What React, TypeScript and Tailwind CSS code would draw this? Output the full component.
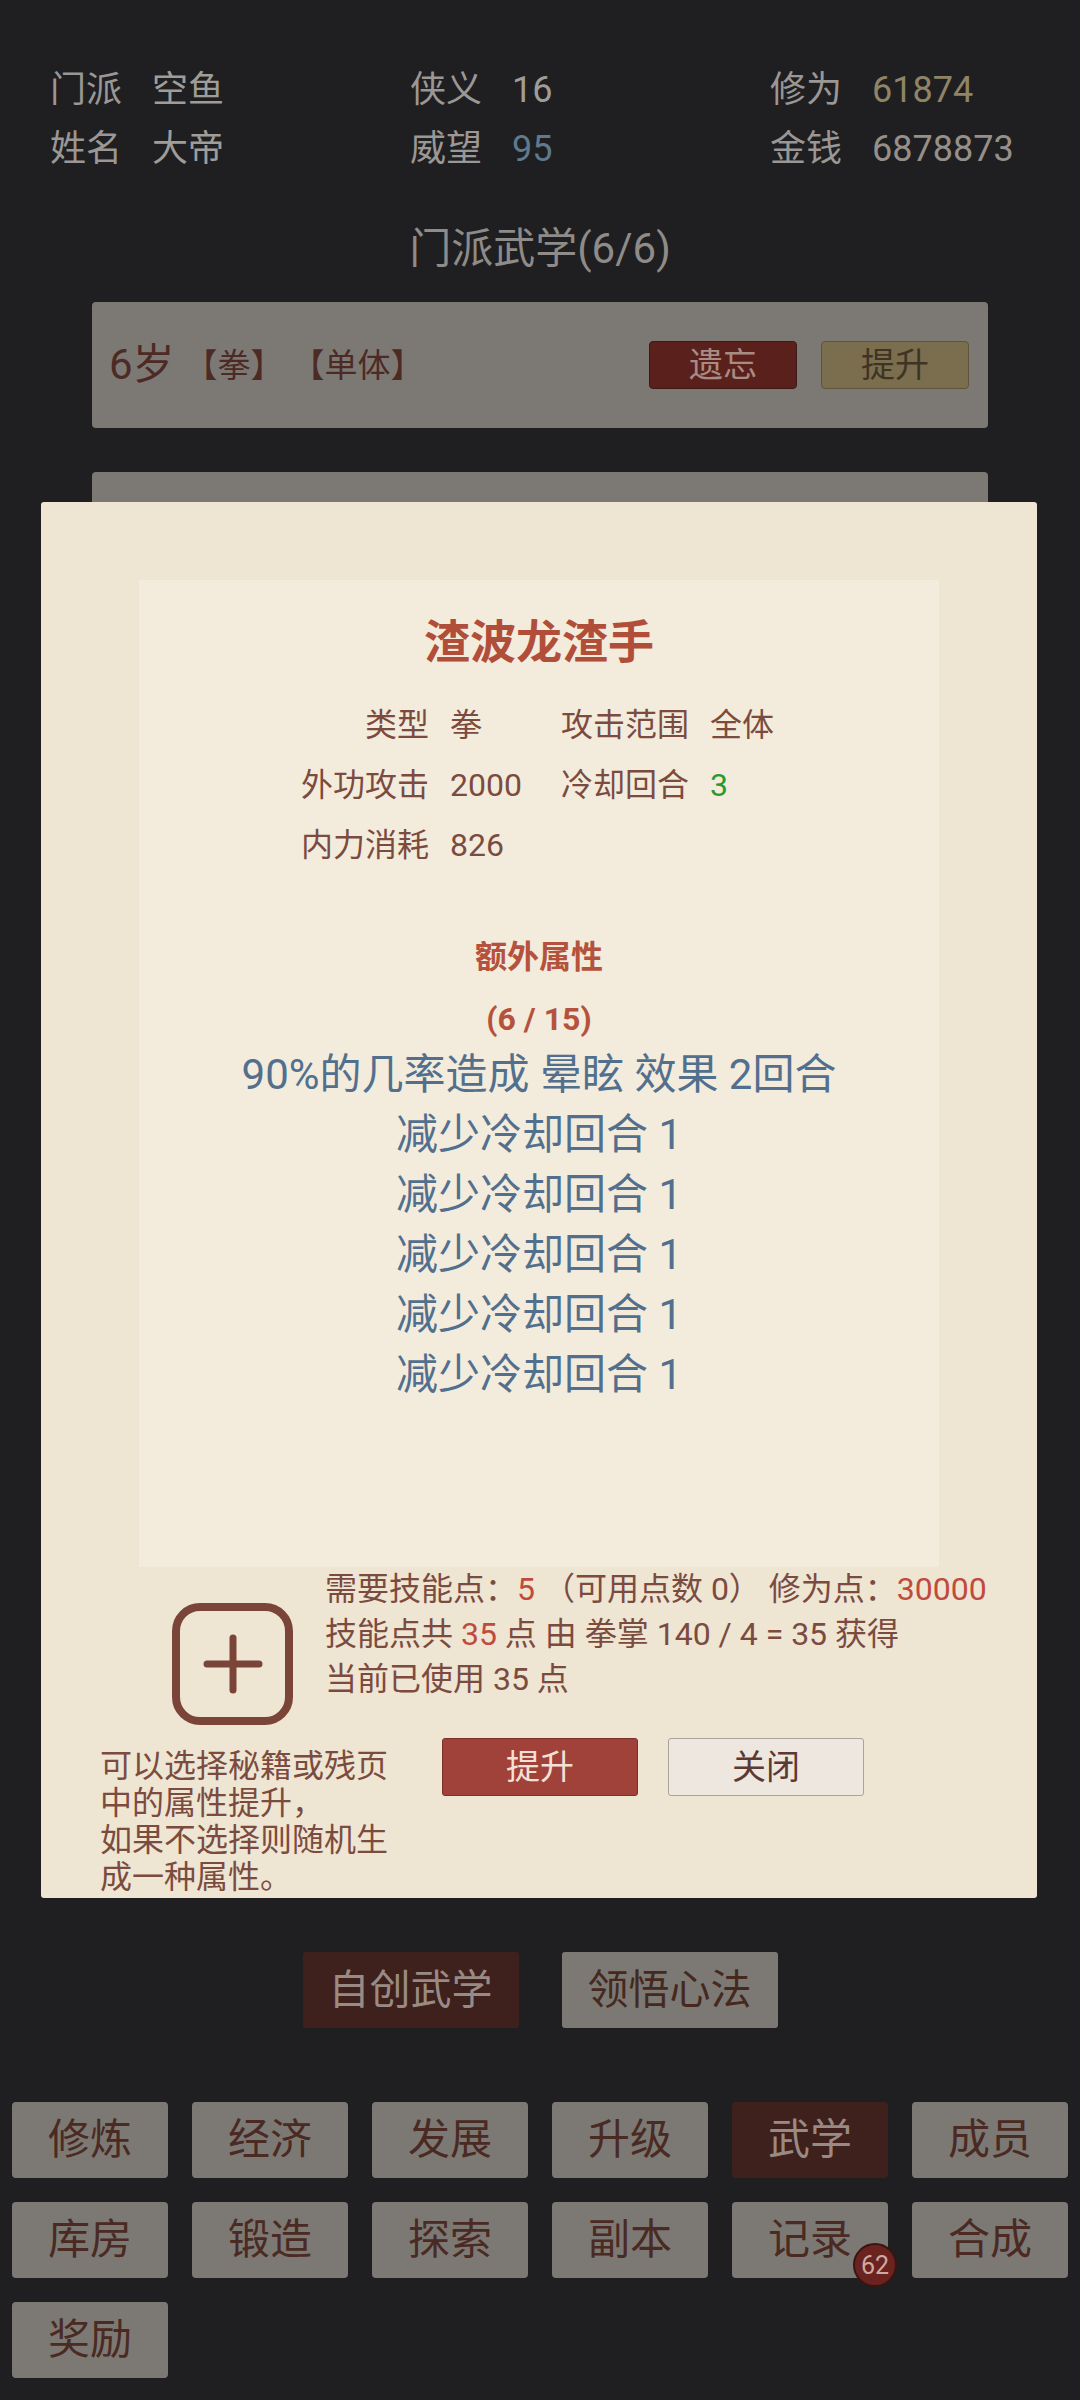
import React from "react";

const navItems = ["修炼", "经济", "发展", "升级", "武学", "成员", "库房", "锻造", "探索", "副本", "记录", "合成", "奖励"];

function StatCol({ rows }: { rows: { label: string; value: string; color: string }[] }) {
  return (
    <div className="w-[360px] pl-[50px]">
      {rows.map((r) => (
        <div key={r.label} className="h-[59px] flex items-center text-[36px]">
          <span className="w-[72px] text-[#9a9794]">{r.label}</span>
          <span className={"ml-[30px] " + r.color}>{r.value}</span>
        </div>
      ))}
    </div>
  );
}

export default function App() {
  return (
    <div className="relative w-[1080px] h-[2400px] overflow-hidden bg-[#1f1f21] font-['Roboto','Noto_Sans_CJK_SC',sans-serif]">
      {/* top stats */}
      <div className="flex pt-[60px]">
        <StatCol
          rows={[
            { label: "门派", value: "空鱼", color: "text-[#a09d98]" },
            { label: "姓名", value: "大帝", color: "text-[#a09d98]" },
          ]}
        />
        <StatCol
          rows={[
            { label: "侠义", value: "16", color: "text-[#a09d98]" },
            { label: "威望", value: "95", color: "text-[#5e7a8c]" },
          ]}
        />
        <StatCol
          rows={[
            { label: "修为", value: "61874", color: "text-[#8f8566]" },
            { label: "金钱", value: "6878873", color: "text-[#978f89]" },
          ]}
        />
      </div>

      <div className="mt-[41px] h-[60px] leading-[60px] text-center text-[42px] text-[#8e8b88]">门派武学(6/6)</div>

      {/* cards */}
      <div className="mt-[23px] h-[1650px] overflow-hidden">
        <div className="mx-[92px] flex flex-col gap-[44px]">
          <div className="h-[126px] rounded-[4px] bg-[#7c7975] flex items-center pl-[17px] pr-[19px]">
            <span className="text-[42px] text-[#4d2a24] leading-none">6岁</span>
            <span className="ml-[10px] text-[33px] text-[#4d2a24] leading-none">【拳】</span>
            <span className="ml-[8px] text-[33px] text-[#4d2a24] leading-none">【单体】</span>
            <div className="flex-1" />
            <div className="w-[148px] h-[48px] rounded-[4px] border border-[#3d1a17] bg-[#5a211c] flex items-center justify-center text-[34px] leading-none text-[#a88c84]">
              遗忘
            </div>
            <div className="ml-[24px] w-[148px] h-[48px] rounded-[4px] border border-[#5f553d] bg-[#7a6e4f] flex items-center justify-center text-[34px] leading-none text-[#3f3424]">
              提升
            </div>
          </div>
          <div className="h-[126px] rounded-[4px] bg-[#7c7975]" />
          <div className="h-[126px] rounded-[4px] bg-[#7c7975]" />
          <div className="h-[126px] rounded-[4px] bg-[#7c7975]" />
          <div className="h-[126px] rounded-[4px] bg-[#7c7975]" />
          <div className="h-[126px] rounded-[4px] bg-[#7c7975]" />
        </div>
      </div>

      {/* create / comprehend */}
      <div className="flex justify-center gap-[43px]">
        <div className="w-[216px] h-[76px] rounded-[3px] bg-[#3e201c] flex items-center justify-center text-[41px] leading-none text-[#9a8a84]">
          自创武学
        </div>
        <div className="w-[216px] h-[76px] rounded-[3px] bg-[#7c7975] flex items-center justify-center text-[41px] leading-none text-[#45291f]">
          领悟心法
        </div>
      </div>

      {/* nav grid */}
      <div className="mt-[74px] px-[12px] grid grid-cols-6 gap-[24px]">
        {navItems.map((n) => {
          const active = n === "武学";
          return (
            <div
              key={n}
              className={
                "relative h-[76px] rounded-[4px] flex items-center justify-center text-[42px] leading-none " +
                (active ? "bg-[#3e201c] text-[#9a8a84]" : "bg-[#7c7975] text-[#4a2a22]")
              }
            >
              {n}
              {n === "记录" && (
                <div className="absolute -right-[9px] -bottom-[9px] w-[44px] h-[44px] rounded-full bg-[#6b2320] border-2 border-[#3a1411] flex items-center justify-center text-[25px] leading-none text-[#cfa9a0]">
                  62
                </div>
              )}
            </div>
          );
        })}
      </div>

      {/* modal */}
      <div className="absolute top-[502px] left-[41px] w-[996px] h-[1396px] rounded-[3px] bg-[#eee5d3] pt-[78px]">
        <div className="mx-[98px] h-[987px] bg-[#f3ebdc] pt-[32px] flex flex-col">
          <div className="h-[60px] leading-[60px] text-center text-[46px] font-bold text-[#b14e3a]">渣波龙渣手</div>
          <div className="mt-[23px] ml-[162px] text-[32px] text-[#7c4b3f]">
            <div className="h-[60px] flex items-center">
              <span className="w-[128px] text-right">类型</span>
              <span className="ml-[21px] w-[111px]">拳</span>
              <span className="w-[128px]">攻击范围</span>
              <span className="ml-[21px]">全体</span>
            </div>
            <div className="h-[60px] flex items-center">
              <span className="w-[128px] text-right">外功攻击</span>
              <span className="ml-[21px] w-[111px]">2000</span>
              <span className="w-[128px]">冷却回合</span>
              <span className="ml-[21px] text-[#2b9a2b]">3</span>
            </div>
            <div className="h-[60px] flex items-center">
              <span className="w-[128px] text-right">内力消耗</span>
              <span className="ml-[21px] w-[111px]">826</span>
            </div>
          </div>
          <div className="mt-[53px] h-[59px] leading-[59px] text-center text-[32px] font-bold text-[#b5523d]">额外属性</div>
          <div className="mt-[6px] h-[52px] leading-[52px] text-center text-[32px] font-bold text-[#b5523d]">(6 / 15)</div>
          <div className="text-center text-[42px] leading-[60px] text-[#52708e]">
            <div>90%的几率造成 晕眩 效果 2回合</div>
            <div>减少冷却回合 1</div>
            <div>减少冷却回合 1</div>
            <div>减少冷却回合 1</div>
            <div>减少冷却回合 1</div>
            <div>减少冷却回合 1</div>
          </div>
        </div>

        {/* bottom area */}
        <div className="flex">
          <div className="w-[284px] shrink-0">
            <div className="ml-[131px] mt-[36px] w-[121px] h-[122px] rounded-[28px] border-[8px] border-[#7a4538] flex items-center justify-center">
              <svg width="60" height="60" viewBox="0 0 60 60">
                <line x1="4" y1="30" x2="56" y2="30" stroke="#7a4538" strokeWidth="7" strokeLinecap="round" />
                <line x1="30" y1="4" x2="30" y2="56" stroke="#7a4538" strokeWidth="7" strokeLinecap="round" />
              </svg>
            </div>
          </div>
          <div className="text-[32px] leading-[45px] text-[#7c4b3f] whitespace-nowrap">
            <div>
              需要技能点：<span className="text-[#c04a3c]">5</span> （可用点数 0） 修为点：<span className="text-[#c04a3c]">30000</span>
            </div>
            <div>
              技能点共 <span className="text-[#c04a3c]">35</span> 点 由 拳掌 140 / 4 = 35 获得
            </div>
            <div>当前已使用 35 点</div>
          </div>
        </div>
        <div className="mt-[13px] flex">
          <div className="ml-[59px] mt-[10px] w-[288px] text-[32px] leading-[37px] text-[#7c4b3f]">
            <div>可以选择秘籍或残页</div>
            <div>中的属性提升，</div>
            <div>如果不选择则随机生</div>
            <div>成一种属性。</div>
          </div>
          <div className="ml-[54px] w-[196px] h-[58px] rounded-[3px] border border-[#7b2f28] bg-[#a0423a] flex items-center justify-center text-[34px] leading-none text-[#f3e1d8]">
            提升
          </div>
          <div className="ml-[30px] w-[196px] h-[58px] rounded-[3px] border border-[#aaa49c] bg-[#ede7e0] flex items-center justify-center text-[34px] leading-none text-[#5a3a33]">
            关闭
          </div>
        </div>
      </div>
    </div>
  );
}
